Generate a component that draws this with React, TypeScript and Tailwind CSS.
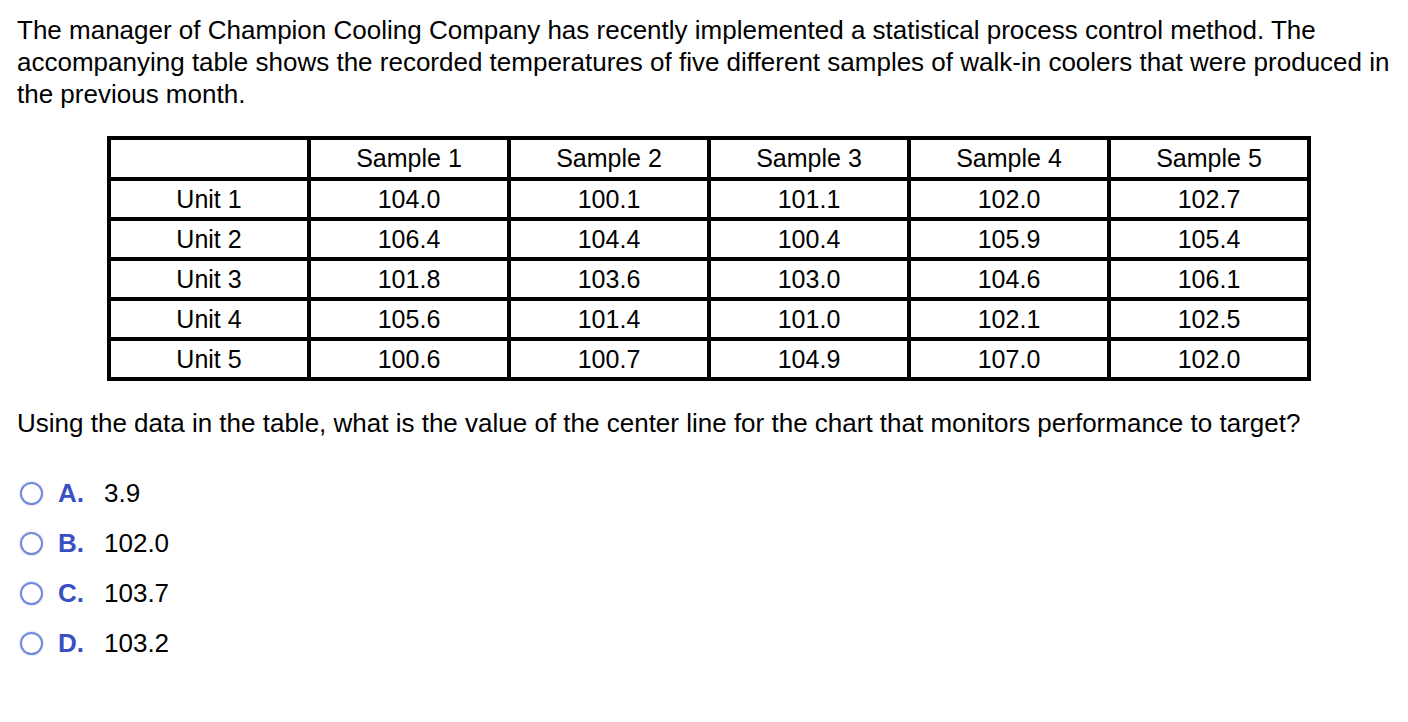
const header = ["", "Sample 1", "Sample 2", "Sample 3", "Sample 4", "Sample 5"];

const rows: [string, string[]][] = [
  ["Unit 1", ["104.0", "100.1", "101.1", "102.0", "102.7"]],
  ["Unit 2", ["106.4", "104.4", "100.4", "105.9", "105.4"]],
  ["Unit 3", ["101.8", "103.6", "103.0", "104.6", "106.1"]],
  ["Unit 4", ["105.6", "101.4", "101.0", "102.1", "102.5"]],
  ["Unit 5", ["100.6", "100.7", "104.9", "107.0", "102.0"]],
];

const choices = [
  { key: "A.", value: "3.9" },
  { key: "B.", value: "102.0" },
  { key: "C.", value: "103.7" },
  { key: "D.", value: "103.2" },
];

export default function App() {
  return (
    <div className="min-h-screen bg-white text-black font-['Liberation_Sans',Arial,sans-serif] text-[26px]">
      <div className="pl-[17px] pt-[14px]">
        <p className="leading-[32px] whitespace-nowrap">
          The manager of Champion Cooling Company has recently implemented a statistical process control method. The
          <br />
          accompanying table shows the recorded temperatures of five different samples of walk-in coolers that were produced in
          <br />
          the previous month.
        </p>

        <div className="pl-[90px] pt-[26px]">
          <table className="border-collapse border-[4px] border-black text-[25px]">
            <thead>
              <tr>
                {header.map((h, i) => (
                  <th key={i} className="w-[200px] h-[41px] border-[4px] border-black font-normal text-center leading-none p-0">
                    {h}
                  </th>
                ))}
              </tr>
            </thead>
            <tbody>
              {rows.map(([unit, vals]) => (
                <tr key={unit}>
                  <td className="h-[40px] border-[4px] border-black text-center leading-none p-0">{unit}</td>
                  {vals.map((v, i) => (
                    <td key={i} className="h-[40px] border-[4px] border-black text-center leading-none p-0">
                      {v}
                    </td>
                  ))}
                </tr>
              ))}
            </tbody>
          </table>
        </div>

        <p className="pt-[26px] leading-[32px]">
          Using the data in the table, what is the value of the center line for the chart that monitors performance to
          target?
        </p>

        <div className="pt-[38px] flex flex-col gap-[18px]">
          {choices.map((c) => (
            <div key={c.key} className="flex items-center h-[32px]">
              <span className="w-[23px] h-[23px] rounded-full border-[2px] border-[#7388d8] ml-[3px] shadow-[0_0_2px_#a9b8ec]" />
              <span className="ml-[15px] w-[46px] font-bold text-[#3a4fc4]">{c.key}</span>
              <span>{c.value}</span>
            </div>
          ))}
        </div>
      </div>
    </div>
  );
}
